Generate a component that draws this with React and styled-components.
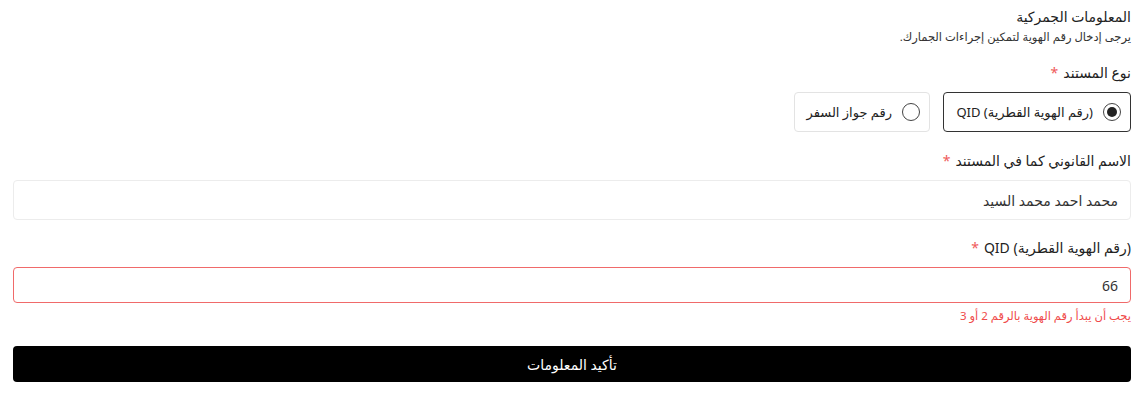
import React, { useState } from "react";
import styled, { createGlobalStyle } from "styled-components";

const Global = createGlobalStyle`
  html, body { margin: 0; padding: 0; background: #fff; }
  body { font-family: "Noto Sans", "DejaVu Sans", sans-serif; color: #222; }
  * { box-sizing: border-box; }
`;

const Page = styled.div`
  direction: rtl;
  padding: 6px 10px 0 10px;
  width: 1141px;
`;

const Inner = styled.div`
  display: flex;
  flex-direction: column;
  padding: 0 0 0 3px;
`;

const Title = styled.div`
  font-size: 14px;
  line-height: 22px;
  color: #222;
`;

const Sub = styled.div`
  font-size: 11.5px;
  line-height: 18px;
  color: #333;
`;

const Label = styled.div`
  font-size: 14px;
  line-height: 22px;
  color: #222;
  margin-top: ${(p) => p.$mt}px;
  margin-bottom: ${(p) => p.$mb}px;
`;

const Star = styled.span`
  color: #ef5b5b;
  margin-right: 5px;
`;

const RadioRow = styled.div`
  display: flex;
  gap: 13px;
`;

const RadioCard = styled.label`
  display: flex;
  align-items: center;
  gap: 10px;
  width: ${(p) => p.$w}px;
  height: 40px;
  padding: 0 9px;
  border: 1px solid ${(p) => (p.$active ? "#333" : "#e3e3e3")};
  border-radius: 4px;
  font-size: 13px;
  color: #222;
  white-space: nowrap;
  cursor: pointer;
`;

const Circle = styled.span`
  width: 18px;
  height: 18px;
  border-radius: 50%;
  border: 1.5px solid #444;
  display: flex;
  align-items: center;
  justify-content: center;
  flex-shrink: 0;
  &::after {
    content: "";
    width: 10px;
    height: 10px;
    border-radius: 50%;
    background: #222;
    display: ${(p) => (p.$on ? "block" : "none")};
  }
`;

const Input = styled.input`
  direction: rtl;
  width: 100%;
  height: ${(p) => p.$h}px;
  border: 1px solid ${(p) => (p.$error ? "#f06a6a" : "#ececec")};
  border-radius: 4px;
  padding: 0 12px;
  font-family: inherit;
  font-size: 14px;
  color: #333;
  outline: none;
  background: #fff;
`;

const ErrorText = styled.div`
  font-size: 11.5px;
  line-height: 18px;
  color: #ef4a4a;
  margin-top: 4px;
`;

const Button = styled.button`
  margin-top: 21px;
  width: 100%;
  height: 36px;
  background: #000;
  color: #fff;
  border: none;
  border-radius: 4px;
  font-family: inherit;
  font-size: 14px;
  cursor: pointer;
`;

export default function App() {
  const [doc, setDoc] = useState("qid");
  return (
    <>
      <Global />
      <Page>
        <Inner>
          <Title>المعلومات الجمركية</Title>
          <Sub>يرجى إدخال رقم الهوية لتمكين إجراءات الجمارك.</Sub>
          <Label $mt={16} $mb={8}>
            نوع المستند<Star>*</Star>
          </Label>
          <RadioRow>
            <RadioCard $active={doc === "qid"} $w={188} onClick={() => setDoc("qid")}>
              <Circle $on={doc === "qid"} />
              (رقم الهوية القطرية) QID
            </RadioCard>
            <RadioCard $active={doc === "pp"} $w={136} onClick={() => setDoc("pp")}>
              <Circle $on={doc === "pp"} />
              رقم جواز السفر
            </RadioCard>
          </RadioRow>
          <Label $mt={18} $mb={8}>
            الاسم القانوني كما في المستند<Star>*</Star>
          </Label>
          <Input $h={40} defaultValue="محمد احمد محمد السيد" />
          <Label $mt={17} $mb={8}>
            (رقم الهوية القطرية) QID<Star>*</Star>
          </Label>
          <Input $h={36} $error defaultValue="66" />
          <ErrorText>يجب أن يبدأ رقم الهوية بالرقم 2 أو 3</ErrorText>
          <Button>تأكيد المعلومات</Button>
        </Inner>
      </Page>
    </>
  );
}
